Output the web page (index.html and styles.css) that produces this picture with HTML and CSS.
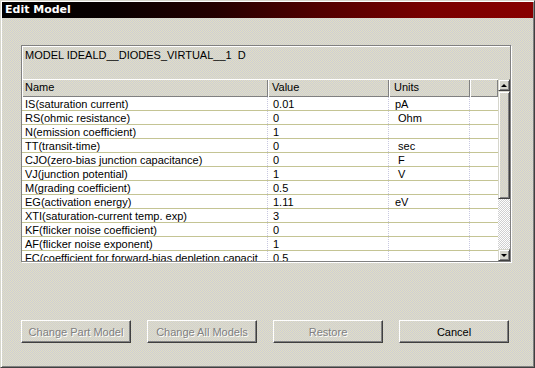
FILE: index.html
```html
<!DOCTYPE html>
<html>
<head>
<meta charset="utf-8">
<link rel="stylesheet" href="styles.css">
</head>
<body>
<div class="window">
  <div class="titlebar">Edit Model</div>
  <div class="content">
    <div class="panel">
      <div class="model">MODEL IDEALD__DIODES_VIRTUAL__1&nbsp; D</div>
      <div class="gridwrap">
        <div class="grid">
          <div class="row head">
            <div class="c c1">Name</div><div class="c c2">Value</div><div class="c c3">Units</div><div class="c c4"></div>
          </div>
          <div class="row"><div class="c c1">IS(saturation current)</div><div class="c c2">0.01</div><div class="c c3">pA</div><div class="c c4"></div></div>
          <div class="row"><div class="c c1">RS(ohmic resistance)</div><div class="c c2">0</div><div class="c c3">&nbsp;Ohm</div><div class="c c4"></div></div>
          <div class="row"><div class="c c1">N(emission coefficient)</div><div class="c c2">1</div><div class="c c3"></div><div class="c c4"></div></div>
          <div class="row"><div class="c c1">TT(transit-time)</div><div class="c c2">0</div><div class="c c3">&nbsp;sec</div><div class="c c4"></div></div>
          <div class="row"><div class="c c1">CJO(zero-bias junction capacitance)</div><div class="c c2">0</div><div class="c c3">&nbsp;F</div><div class="c c4"></div></div>
          <div class="row"><div class="c c1">VJ(junction potential)</div><div class="c c2">1</div><div class="c c3">&nbsp;V</div><div class="c c4"></div></div>
          <div class="row"><div class="c c1">M(grading coefficient)</div><div class="c c2">0.5</div><div class="c c3"></div><div class="c c4"></div></div>
          <div class="row"><div class="c c1">EG(activation energy)</div><div class="c c2">1.11</div><div class="c c3">eV</div><div class="c c4"></div></div>
          <div class="row"><div class="c c1">XTI(saturation-current temp. exp)</div><div class="c c2">3</div><div class="c c3"></div><div class="c c4"></div></div>
          <div class="row"><div class="c c1">KF(flicker noise coefficient)</div><div class="c c2">0</div><div class="c c3"></div><div class="c c4"></div></div>
          <div class="row"><div class="c c1">AF(flicker noise exponent)</div><div class="c c2">1</div><div class="c c3"></div><div class="c c4"></div></div>
          <div class="row"><div class="c c1">FC(coefficient for forward-bias depletion capacit</div><div class="c c2">0.5</div><div class="c c3"></div><div class="c c4"></div></div>
        </div>
        <div class="scrollbar">
          <div class="sbtn"><span class="tri up"></span></div>
          <div class="thumb"></div>
          <div class="track"></div>
          <div class="sbtn"><span class="tri down"></span></div>
        </div>
      </div>
    </div>
    <div class="buttons">
      <div class="btn disabled">Change Part Model</div>
      <div class="btn disabled">Change All Models</div>
      <div class="btn disabled">Restore</div>
      <div class="btn">Cancel</div>
    </div>
  </div>
</div>
</body>
</html>
```

FILE: styles.css
```css
html, body {
  margin: 0;
  padding: 0;
  background: #d6d6cc;
}
body {
  font-family: "Liberation Sans", Arial, sans-serif;
  font-size: 11px;
  color: #000;
}
.window {
  width: 535px;
  height: 368px;
  box-sizing: border-box;
  border: 1px solid;
  border-color: #d6d6cc #404040 #404040 #d6d6cc;
  box-shadow: inset 1px 1px #ffffff, inset -1px -1px #808080;
  padding: 1px;
  background: conic-gradient(#e2e0c2 25%, #cdcdd6 0 50%, #e2e0c2 0 75%, #cdcdd6 0);
  background-size: 2px 2px;
  display: flex;
  flex-direction: column;
}
.titlebar {
  height: 16px;
  line-height: 16px;
  padding-left: 3px;
  color: #fff;
  font-family: "DejaVu Sans", sans-serif;
  font-weight: bold;
  font-size: 11px;
  background: linear-gradient(90deg, #000000 0%, #080000 20%, #240000 40%, #520000 60%, #780000 80%, #880000 100%);
}
.content {
  padding: 27px 0 0 19px;
  flex: 1;
}
.panel {
  width: 490px;
  height: 217px;
  box-sizing: border-box;
  border: 1px solid #808080;
  box-shadow: inset 1px 1px #ffffff, 1px 1px #ffffff;
  display: flex;
  flex-direction: column;
}
.model {
  height: 33px;
  padding: 3px 0 0 3px;
  box-sizing: border-box;
  line-height: 13px;
}
.gridwrap {
  display: flex;
  height: 182px;
  overflow: hidden;
}
.grid {
  width: 476px;
  background: #fff;
  overflow: hidden;
}
.row {
  display: flex;
  height: 14px;
  border-bottom: 1px solid #c4c494;
  box-sizing: border-box;
}
.c {
  line-height: 13px;
  padding-top: 1px;
  white-space: nowrap;
  overflow: hidden;
  box-sizing: border-box;
  border-right: 1px dotted #c8c8e0;
}
.c1 { width: 246px; padding-left: 3px; }
.c2 { width: 121px; padding-left: 5px; }
.c3 { width: 81px; padding-left: 6px; }
.c4 { width: 28px; border-right: none; }
.row.head {
  height: 18px;
  border-bottom: none;
  background: conic-gradient(#e2e0c2 25%, #cdcdd6 0 50%, #e2e0c2 0 75%, #cdcdd6 0);
  background-size: 2px 2px;
}
.head .c {
  border-right: none;
  padding-top: 0;
  box-shadow: inset 1px 1px #ffffff, inset -1px -1px #808080;
  line-height: 17px;
}
.head .c2 { padding-left: 4px; }
.head .c3 { padding-left: 5px; }
.scrollbar {
  width: 12px;
  display: flex;
  flex-direction: column;
}
.sbtn {
  height: 12px;
  box-sizing: border-box;
  border: 1px solid;
  border-color: #d6d6cc #404040 #404040 #d6d6cc;
  box-shadow: inset 1px 1px #ffffff, inset -1px -1px #808080;
  background: #d6d6cc;
  display: flex;
  align-items: center;
  justify-content: center;
}
.tri {
  width: 0;
  height: 0;
  border-left: 3px solid transparent;
  border-right: 3px solid transparent;
}
.tri.up { border-bottom: 3px solid #000; }
.tri.down { border-top: 3px solid #000; }
.thumb {
  height: 108px;
  box-sizing: border-box;
  border: 1px solid;
  border-color: #d6d6cc #404040 #404040 #d6d6cc;
  box-shadow: inset 1px 1px #ffffff, inset -1px -1px #808080;
  background: conic-gradient(#e2e0c2 25%, #cdcdd6 0 50%, #e2e0c2 0 75%, #cdcdd6 0);
  background-size: 2px 2px;
}
.track {
  flex: 1;
  background: conic-gradient(#ffffff 25%, #cfcfd0 0 50%, #ffffff 0 75%, #cfcfd0 0);
  background-size: 2px 2px;
}
.buttons {
  display: flex;
  gap: 16px;
  margin-top: 58px;
}
.btn {
  width: 110px;
  height: 23px;
  box-sizing: border-box;
  border: 1px solid;
  border-color: #ffffff #404040 #404040 #ffffff;
  box-shadow: inset -1px -1px #808080;
  display: flex;
  align-items: center;
  justify-content: center;
}
.btn.disabled {
  color: #808080;
  text-shadow: 1px 1px #ffffff;
}
```
